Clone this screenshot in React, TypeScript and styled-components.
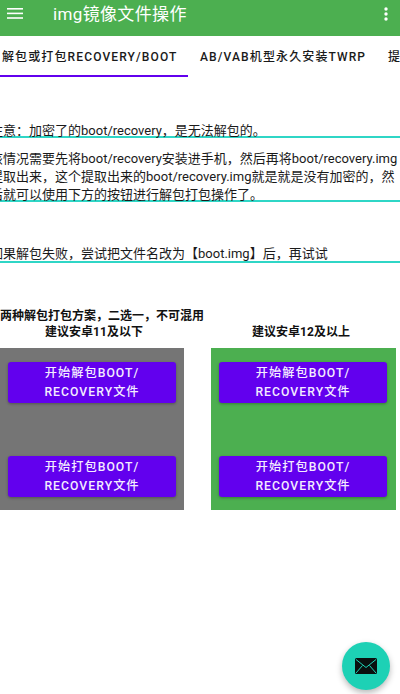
import { createGlobalStyle, styled } from 'styled-components';

const FONT = `Roboto, "Noto Sans CJK SC", sans-serif`;

const GlobalStyle = createGlobalStyle`
  html, body {
    margin: 0;
    padding: 0;
    background: #ffffff;
  }
  * {
    box-sizing: border-box;
  }
`;

const Screen = styled.div`
  position: relative;
  width: 400px;
  height: 694px;
  overflow: hidden;
  background: #ffffff;
  font-family: ${FONT};
  color: #1a1a1a;
`;

const AppBar = styled.header`
  height: 36px;
  background: #4caf50;
  display: flex;
  align-items: center;
  padding: 0 12px 9px 7px;
  color: #ffffff;
`;

const Title = styled.div`
  flex: 1;
  margin-left: 30px;
  font-size: 17px;
  font-weight: 400;
  letter-spacing: 0.35px;
  line-height: 26px;
  white-space: nowrap;
`;

const TabBar = styled.nav`
  height: 42px;
  display: flex;
  overflow: hidden;
`;

const Tab = styled.div<{ $active?: boolean; $width: number }>`
  flex: 0 0 ${({ $width }) => $width}px;
  height: 41px;
  padding-top: 11px;
  padding-left: ${({ $active }) => ($active ? '2px' : '12px')};
  font-size: 12px;
  line-height: 20px;
  font-weight: 500;
  letter-spacing: 1.12px;
  text-transform: uppercase;
  white-space: nowrap;
  overflow: hidden;
  border-bottom: 2px solid ${({ $active }) => ($active ? '#6200ee' : 'transparent')};
`;

const Notes = styled.section`
  margin-left: -10px;
  width: 410px;
`;

const Note = styled.p<{ $top: number; $height: number }>`
  margin: ${({ $top }) => $top}px 0 0;
  height: ${({ $height }) => $height}px;
  font-size: 13px;
  line-height: 18px;
  white-space: nowrap;
  border-bottom: 2px solid #2fd6c6;
`;

const Heading = styled.div`
  margin-top: 45px;
  font-size: 12px;
  line-height: 16px;
  font-weight: 700;
  color: #111111;
  white-space: nowrap;
`;

const Columns = styled.div`
  display: grid;
  grid-template-columns: 184px 185px;
  column-gap: 27px;
`;

const Column = styled.div`
  min-width: 0;
`;

const ColumnTitle = styled.div<{ $shift: number }>`
  height: 24px;
  padding-left: ${({ $shift }) => Math.max($shift, 0)}px;
  padding-right: ${({ $shift }) => Math.max(-$shift, 0)}px;
  text-align: center;
  font-size: 12px;
  line-height: 17px;
  font-weight: 700;
  color: #111111;
`;

const Panel = styled.div<{ $color: string }>`
  height: 162px;
  background: ${({ $color }) => $color};
  display: flex;
  flex-direction: column;
  justify-content: space-between;
  padding: 14px 8px 13px;
`;

const ActionButton = styled.button`
  width: 168px;
  height: 41px;
  padding: 0 16px;
  border: 0;
  border-radius: 3px;
  background: #6200ee;
  color: #f4ecff;
  font-family: ${FONT};
  font-size: 12.2px;
  font-weight: 500;
  line-height: 18.5px;
  letter-spacing: 1.05px;
  text-transform: uppercase;
  box-shadow: 0 1px 3px rgba(0, 0, 0, 0.3);
`;

const Fab = styled.button`
  position: absolute;
  left: 342px;
  top: 642px;
  width: 48px;
  height: 48px;
  padding: 0;
  border: 0;
  border-radius: 50%;
  background: #1dd1b5;
  display: flex;
  align-items: center;
  justify-content: center;
  box-shadow: 0 3px 6px rgba(0, 0, 0, 0.28);
`;

function MenuIcon() {
  return (
    <svg width="16" height="11" viewBox="0 0 16 11" fill="#ffffff">
      <rect y="0" width="16" height="1.6" />
      <rect y="4.6" width="16" height="1.6" />
      <rect y="9.2" width="16" height="1.6" />
    </svg>
  );
}

function MoreIcon() {
  return (
    <svg width="4" height="14" viewBox="0 0 4 14" fill="#ffffff">
      <circle cx="2" cy="2" r="1.7" />
      <circle cx="2" cy="7" r="1.7" />
      <circle cx="2" cy="12" r="1.7" />
    </svg>
  );
}

function MailIcon() {
  return (
    <svg width="22" height="16" viewBox="0 0 22 16">
      <rect width="22" height="16" rx="1.5" fill="#0a0f0e" />
      <path d="M1 1.5 11 9.5 21 1.5M1 15 7.5 7.5M21 15 14.5 7.5" fill="none" stroke="#1dd1b5" strokeWidth="1" />
    </svg>
  );
}

export default function App() {
  return (
    <Screen>
      <GlobalStyle />
      <AppBar>
        <MenuIcon />
        <Title>img镜像文件操作</Title>
        <MoreIcon />
      </AppBar>
      <TabBar>
        <Tab $active $width={188}>解包或打包recovery/boot</Tab>
        <Tab $width={188}>AB/VAB机型永久安装TWRP</Tab>
        <Tab $width={60}>提取</Tab>
      </TabBar>
      <Notes>
        <Note $top={44} $height={16}>注意：加密了的boot/recovery，是无法解包的。</Note>
        <Note $top={12} $height={52}>
          该情况需要先将boot/recovery安装进手机，然后再将boot/recovery.img
          <br />
          提取出来，这个提取出来的boot/recovery.img就是就是没有加密的，然
          <br />
          后就可以使用下方的按钮进行解包打包操作了。
        </Note>
        <Note $top={43} $height={18}>如果解包失败，尝试把文件名改为【boot.img】后，再试试</Note>
      </Notes>
      <Heading>两种解包打包方案，二选一，不可混用</Heading>
      <Columns>
        <Column>
          <ColumnTitle $shift={4}>建议安卓11及以下</ColumnTitle>
          <Panel $color="#757575">
            <ActionButton>开始解包boot/ recovery文件</ActionButton>
            <ActionButton>开始打包boot/ recovery文件</ActionButton>
          </Panel>
        </Column>
        <Column>
          <ColumnTitle $shift={-5}>建议安卓12及以上</ColumnTitle>
          <Panel $color="#4caf50">
            <ActionButton>开始解包boot/ recovery文件</ActionButton>
            <ActionButton>开始打包boot/ recovery文件</ActionButton>
          </Panel>
        </Column>
      </Columns>
      <Fab aria-label="mail">
        <MailIcon />
      </Fab>
    </Screen>
  );
}
